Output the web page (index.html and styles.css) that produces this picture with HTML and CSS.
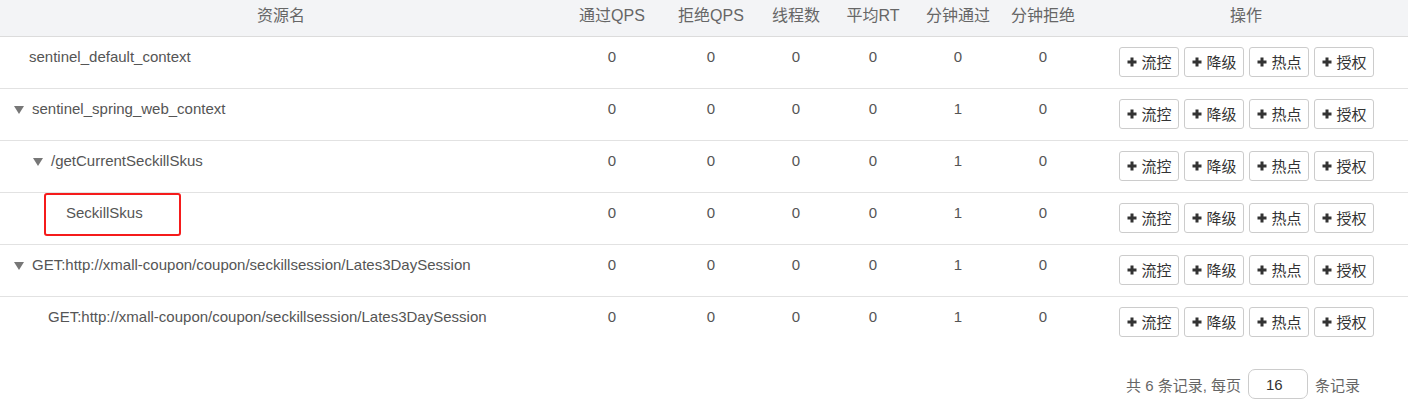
FILE: index.html
```html
<!DOCTYPE html>
<html lang="zh-CN">
<head>
<meta charset="utf-8">
<title>簇点链路</title>
<link rel="stylesheet" href="styles.css">
</head>
<body>
<div class="page">
  <table class="res-table">
    <colgroup>
      <col class="c-name"><col class="c-pass"><col class="c-block"><col class="c-thread">
      <col class="c-rt"><col class="c-mpass"><col class="c-mblock"><col class="c-ops">
    </colgroup>
    <thead>
      <tr>
        <th>资源名</th><th>通过QPS</th><th>拒绝QPS</th><th>线程数</th><th>平均RT</th><th>分钟通过</th><th>分钟拒绝</th><th>操作</th>
      </tr>
    </thead>
    <tbody>
      <tr>
        <td class="name"><span class="lvl lvl0 leaf">sentinel_default_context</span></td>
        <td>0</td><td>0</td><td>0</td><td>0</td><td>0</td><td>0</td>
        <td class="ops"><div class="btns"><button class="btn"><svg class="plus" viewBox="0 0 10 10"><path d="M5 0.5V9.5M0.5 5H9.5"/></svg>流控</button><button class="btn"><svg class="plus" viewBox="0 0 10 10"><path d="M5 0.5V9.5M0.5 5H9.5"/></svg>降级</button><button class="btn"><svg class="plus" viewBox="0 0 10 10"><path d="M5 0.5V9.5M0.5 5H9.5"/></svg>热点</button><button class="btn"><svg class="plus" viewBox="0 0 10 10"><path d="M5 0.5V9.5M0.5 5H9.5"/></svg>授权</button></div></td>
      </tr>
      <tr>
        <td class="name"><span class="lvl lvl0 node"><i class="caret"></i>sentinel_spring_web_context</span></td>
        <td>0</td><td>0</td><td>0</td><td>0</td><td>1</td><td>0</td>
        <td class="ops"><div class="btns"><button class="btn"><svg class="plus" viewBox="0 0 10 10"><path d="M5 0.5V9.5M0.5 5H9.5"/></svg>流控</button><button class="btn"><svg class="plus" viewBox="0 0 10 10"><path d="M5 0.5V9.5M0.5 5H9.5"/></svg>降级</button><button class="btn"><svg class="plus" viewBox="0 0 10 10"><path d="M5 0.5V9.5M0.5 5H9.5"/></svg>热点</button><button class="btn"><svg class="plus" viewBox="0 0 10 10"><path d="M5 0.5V9.5M0.5 5H9.5"/></svg>授权</button></div></td>
      </tr>
      <tr>
        <td class="name"><span class="lvl lvl1 node"><i class="caret"></i>/getCurrentSeckillSkus</span></td>
        <td>0</td><td>0</td><td>0</td><td>0</td><td>1</td><td>0</td>
        <td class="ops"><div class="btns"><button class="btn"><svg class="plus" viewBox="0 0 10 10"><path d="M5 0.5V9.5M0.5 5H9.5"/></svg>流控</button><button class="btn"><svg class="plus" viewBox="0 0 10 10"><path d="M5 0.5V9.5M0.5 5H9.5"/></svg>降级</button><button class="btn"><svg class="plus" viewBox="0 0 10 10"><path d="M5 0.5V9.5M0.5 5H9.5"/></svg>热点</button><button class="btn"><svg class="plus" viewBox="0 0 10 10"><path d="M5 0.5V9.5M0.5 5H9.5"/></svg>授权</button></div></td>
      </tr>
      <tr>
        <td class="name marked"><span class="lvl lvl2 leaf">SeckillSkus</span><span class="highlight"></span></td>
        <td>0</td><td>0</td><td>0</td><td>0</td><td>1</td><td>0</td>
        <td class="ops"><div class="btns"><button class="btn"><svg class="plus" viewBox="0 0 10 10"><path d="M5 0.5V9.5M0.5 5H9.5"/></svg>流控</button><button class="btn"><svg class="plus" viewBox="0 0 10 10"><path d="M5 0.5V9.5M0.5 5H9.5"/></svg>降级</button><button class="btn"><svg class="plus" viewBox="0 0 10 10"><path d="M5 0.5V9.5M0.5 5H9.5"/></svg>热点</button><button class="btn"><svg class="plus" viewBox="0 0 10 10"><path d="M5 0.5V9.5M0.5 5H9.5"/></svg>授权</button></div></td>
      </tr>
      <tr>
        <td class="name"><span class="lvl lvl0 node"><i class="caret"></i>GET:http://xmall-coupon/coupon/seckillsession/Lates3DaySession</span></td>
        <td>0</td><td>0</td><td>0</td><td>0</td><td>1</td><td>0</td>
        <td class="ops"><div class="btns"><button class="btn"><svg class="plus" viewBox="0 0 10 10"><path d="M5 0.5V9.5M0.5 5H9.5"/></svg>流控</button><button class="btn"><svg class="plus" viewBox="0 0 10 10"><path d="M5 0.5V9.5M0.5 5H9.5"/></svg>降级</button><button class="btn"><svg class="plus" viewBox="0 0 10 10"><path d="M5 0.5V9.5M0.5 5H9.5"/></svg>热点</button><button class="btn"><svg class="plus" viewBox="0 0 10 10"><path d="M5 0.5V9.5M0.5 5H9.5"/></svg>授权</button></div></td>
      </tr>
      <tr class="last">
        <td class="name"><span class="lvl lvl1 leaf">GET:http://xmall-coupon/coupon/seckillsession/Lates3DaySession</span></td>
        <td>0</td><td>0</td><td>0</td><td>0</td><td>1</td><td>0</td>
        <td class="ops"><div class="btns"><button class="btn"><svg class="plus" viewBox="0 0 10 10"><path d="M5 0.5V9.5M0.5 5H9.5"/></svg>流控</button><button class="btn"><svg class="plus" viewBox="0 0 10 10"><path d="M5 0.5V9.5M0.5 5H9.5"/></svg>降级</button><button class="btn"><svg class="plus" viewBox="0 0 10 10"><path d="M5 0.5V9.5M0.5 5H9.5"/></svg>热点</button><button class="btn"><svg class="plus" viewBox="0 0 10 10"><path d="M5 0.5V9.5M0.5 5H9.5"/></svg>授权</button></div></td>
      </tr>
    </tbody>
  </table>
  <div class="pager">
    <span>共 6 条记录, 每页</span>
    <input class="page-size" type="text" value="16">
    <span>条记录</span>
  </div>
</div>
</body>
</html>
```
FILE: styles.css
```css
html, body {
  margin: 0;
  padding: 0;
  background: #fff;
}
body {
  font-family: "Liberation Sans", Arial, "Noto Sans CJK SC", sans-serif;
  font-size: 15px;
  color: #555;
}
.page {
  width: 1408px;
}
.res-table {
  width: 1408px;
  border-collapse: collapse;
  table-layout: fixed;
}
.c-name { width: 562px; }
.c-pass { width: 100px; }
.c-block { width: 98px; }
.c-thread { width: 72px; }
.c-rt { width: 82px; }
.c-mpass { width: 88px; }
.c-mblock { width: 82px; }
.c-ops { width: 324px; }

.res-table th {
  height: 36px;
  padding: 0 0 4px 0;
  background: #f3f4f6;
  border-bottom: 1px solid #dcdcdc;
  color: #666;
  font-weight: normal;
  font-size: 16px;
  text-align: center;
  vertical-align: middle;
  line-height: 28px;
  box-sizing: border-box;
}
.res-table td {
  height: 52px;
  padding: 10px 0 0 0;
  box-sizing: border-box;
  line-height: 20px;
  text-align: center;
  vertical-align: top;
  border-bottom: 1px solid #e2e2e2;
  white-space: nowrap;
}
.res-table tr.last td {
  border-bottom: none;
}
.res-table td.name {
  text-align: left;
}
.res-table td.marked {
  position: relative;
}
.lvl {
  display: inline-flex;
  align-items: center;
}
.lvl0.leaf { padding-left: 29px; }
.lvl1.leaf { padding-left: 48px; }
.lvl2.leaf { padding-left: 66px; }
.lvl0.node { padding-left: 14px; }
.lvl1.node { padding-left: 33px; }
.caret {
  display: inline-block;
  width: 0;
  height: 0;
  border-left: 5.5px solid transparent;
  border-right: 5.5px solid transparent;
  border-top: 8px solid #777;
  margin-right: 8px;
  margin-top: 2px;
}
.highlight {
  position: absolute;
  left: 44px;
  top: 0px;
  width: 137px;
  height: 43px;
  border: 2px solid #f51b1b;
  border-radius: 3px;
  box-sizing: border-box;
}
.res-table td.ops {
  padding-top: 10px;
}
.btns {
  display: flex;
  justify-content: center;
  gap: 5px;
  padding-left: 0;
}
.btn {
  display: inline-flex;
  align-items: center;
  justify-content: flex-start;
  gap: 5px;
  width: 60px;
  height: 30px;
  padding: 0 0 0 7px;
  margin: 0;
  background: #fff;
  border: 1px solid #ccc;
  border-radius: 3px;
  font-family: "Liberation Sans", Arial, "Noto Sans CJK SC", sans-serif;
  font-size: 15px;
  color: #333;
  box-sizing: border-box;
}
.plus {
  width: 10px;
  height: 10px;
  flex: none;
  stroke: #333;
  stroke-width: 3;
  fill: none;
}
.pager {
  display: flex;
  justify-content: flex-end;
  align-items: center;
  gap: 7px;
  padding-right: 48px;
  margin-top: 21px;
  color: #666;
  font-size: 15px;
}
.page-size {
  width: 60px;
  height: 30px;
  box-sizing: border-box;
  border: 1px solid #ccc;
  border-radius: 7px;
  padding: 0 0 0 17px;
  text-align: left;
  font-family: "Liberation Sans", Arial, sans-serif;
  font-size: 15px;
  color: #333;
  background: #fff;
}
```
